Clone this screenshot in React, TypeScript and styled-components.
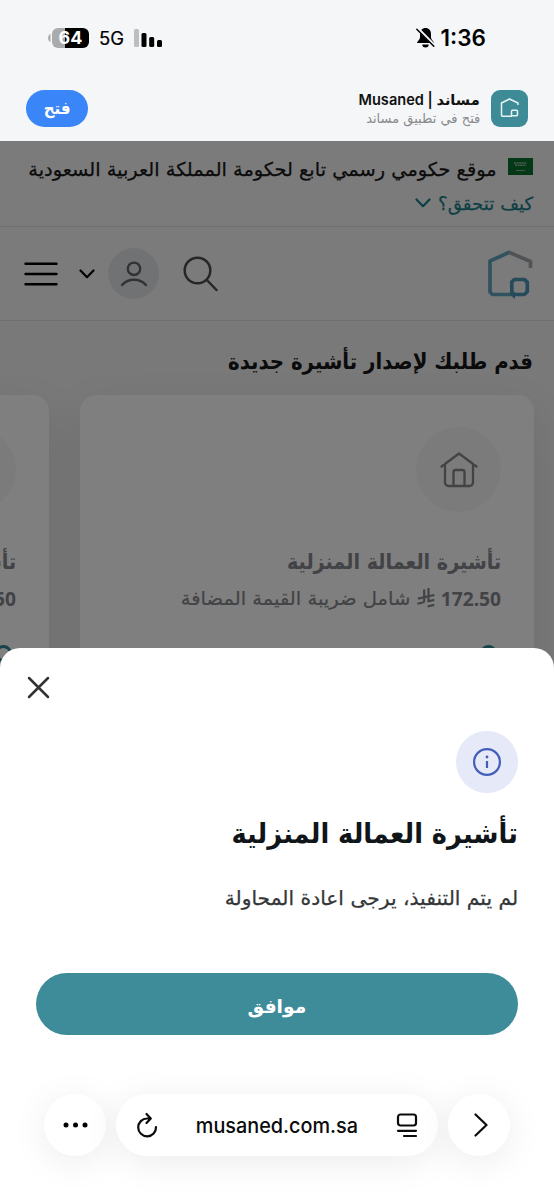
import React from "react";
import styled, { createGlobalStyle } from "styled-components";

const Global = createGlobalStyle`
  * { box-sizing: border-box; }
  body { margin: 0; background: #fff; }
  button { border: 0; padding: 0; background: none; font: inherit; color: inherit; }
  svg { display: block; flex: none; }
`;

const arabic = `"DejaVu Sans", sans-serif`;
const latin = `Inter, "DejaVu Sans", sans-serif`;

const Screen = styled.div`
  position: relative;
  width: 554px;
  height: 1200px;
  overflow: hidden;
  display: flex;
  flex-direction: column;
  direction: rtl;
  font-family: ${arabic};
  background: #fff;
`;

/* One line of text; $stretch condenses or widens the glyphs from the start edge. */
const Line = styled.span<{
  $size: number;
  $weight?: number;
  $color?: string;
  $stretch?: number;
  $origin?: string;
  $font?: string;
  $stroke?: number;
}>`
  display: block;
  flex: none;
  white-space: nowrap;
  font-family: ${(p) => p.$font ?? "inherit"};
  font-size: ${(p) => p.$size}px;
  font-weight: ${(p) => p.$weight ?? 400};
  color: ${(p) => p.$color ?? "#161616"};
  -webkit-text-stroke: ${(p) => p.$stroke ?? 0}px currentColor;
  transform: scaleX(${(p) => p.$stretch ?? 1});
  transform-origin: ${(p) => p.$origin ?? "right"} center;
`;

const StatusBar = styled.header`
  flex: none;
  height: 75px;
  padding: 0 68px 0 48px;
  display: flex;
  align-items: center;
  justify-content: space-between;
  background: #f4f6f8;
  font-family: ${latin};
  color: #000;
`;

const Clock = styled.div`
  display: flex;
  align-items: center;
  gap: 6px;
`;

const Signals = styled.div`
  display: flex;
  align-items: center;
  gap: 10px;
  direction: ltr;
`;

const BatteryGroup = styled.div`
  display: flex;
  align-items: center;
  gap: 1px;
`;

const Battery = styled.div`
  width: 37px;
  height: 20px;
  border-radius: 6px;
  background: linear-gradient(90deg, #a9abad 36%, #000 36%);
  color: #fff;
  font-size: 18px;
  font-weight: 700;
  line-height: 20px;
  text-align: center;
`;

const AppBanner = styled.section`
  flex: none;
  height: 66px;
  padding: 0 26px 0 26px;
  display: flex;
  align-items: center;
  background: #f4f6f8;
`;

const AppIcon = styled.div`
  width: 37px;
  height: 37px;
  border-radius: 9px;
  background: #3e8b98;
  display: flex;
  align-items: center;
  justify-content: center;
`;

const AppNames = styled.div`
  flex: 1;
  margin-right: 11px;
  padding-top: 2px;
  display: flex;
  flex-direction: column;
  align-items: flex-start;
  line-height: 19px;
`;

const OpenButton = styled.button`
  width: 62px;
  height: 37px;
  border-radius: 19px;
  background: #3a86f8;
  display: flex;
  align-items: center;
  justify-content: center;
`;

const Site = styled.main`
  position: relative;
  flex: 1;
  display: flex;
  flex-direction: column;
  overflow: hidden;
  background: #f2f2f3;
`;

const Backdrop = styled.div`
  position: absolute;
  inset: 0;
  background: rgba(0, 0, 0, 0.5);
`;

const GovBar = styled.section`
  flex: none;
  height: 86px;
  padding: 11px 21px 0;
  background: #f7f7f8;
  border-bottom: 1px solid #dedfe1;
`;

const GovRow = styled.div<{ $gap: number }>`
  height: 34px;
  display: flex;
  align-items: center;
  gap: ${(p) => p.$gap}px;
`;

const Flag = styled.svg`
  margin-top: -6px;
`;

const Nav = styled.nav`
  flex: none;
  height: 94px;
  padding: 0 21px 0 24px;
  display: flex;
  align-items: center;
  justify-content: space-between;
  background: #f7f7f8;
  border-bottom: 1px solid #dedfe1;
`;

const NavTools = styled.div`
  display: flex;
  align-items: center;
`;

const Avatar = styled.div`
  width: 51px;
  height: 51px;
  margin: 0 24px 0 13px;
  border-radius: 50%;
  background: #e3e5e8;
  display: flex;
  align-items: center;
  justify-content: center;
`;

const MenuIcon = styled.svg`
  margin-right: 21px;
`;

const Services = styled.section`
  flex: 1;
  padding: 24px 20px 0;
`;

const Heading = styled.div`
  height: 32px;
  padding-right: 1px;
  display: flex;
  align-items: center;
  margin-bottom: 18px;
`;

const Cards = styled.div`
  display: flex;
  gap: 31px;
`;

const Card = styled.article`
  flex: none;
  width: 454px;
  height: 420px;
  padding: 32px 33px 0;
  border-radius: 16px;
  background: #fff;
  box-shadow: 0 16px 44px rgba(30, 32, 60, 0.1);
`;

const CardIcon = styled.div`
  width: 85px;
  height: 85px;
  border-radius: 50%;
  background: #f7f7f7;
  display: flex;
  align-items: center;
  justify-content: center;
`;

const CardTitle = styled.div`
  height: 40px;
  margin-top: 29px;
  display: flex;
  align-items: center;
`;

const Price = styled.div`
  height: 34px;
  display: flex;
  align-items: center;
  gap: 6px;
`;

const Radio = styled.div`
  width: 17px;
  height: 17px;
  margin-top: 30px;
  margin-right: 4px;
  border: 3px solid #2a8a97;
  border-radius: 50%;
`;

const Sheet = styled.section`
  position: absolute;
  inset: 648px 0 0;
  padding: 28px 36px 0;
  display: flex;
  flex-direction: column;
  align-items: flex-start;
  border-radius: 20px 20px 0 0;
  background: #fff;
`;

const Close = styled.button`
  align-self: flex-end;
  margin-left: -9px;
`;

const InfoBadge = styled.div`
  width: 62px;
  height: 62px;
  margin-top: 32px;
  border-radius: 50%;
  background: #e5e9f8;
  display: flex;
  align-items: center;
  justify-content: center;
`;

const SheetTitle = styled.h2`
  margin: 18px 0 0;
  height: 44px;
  display: flex;
  align-items: center;
`;

const SheetText = styled.div`
  margin-top: 23px;
  height: 40px;
  display: flex;
  align-items: center;
`;

const Confirm = styled.button`
  width: 482px;
  height: 62px;
  margin-top: 55px;
  padding-top: 3px;
  border-radius: 31px;
  background: #3e8b9a;
  display: flex;
  align-items: center;
  justify-content: center;
`;

const BrowserBar = styled.footer`
  position: absolute;
  inset: auto 44px 44px;
  height: 62px;
  display: flex;
  gap: 10px;
  direction: ltr;
  color: #0b0b0b;
  font-family: ${latin};
`;

const RoundButton = styled.button<{ $nudge?: number }>`
  width: 62px;
  height: 62px;
  padding-left: ${(p) => p.$nudge ?? 0}px;
  border-radius: 50%;
  background: #fff;
  box-shadow: 0 6px 36px rgba(0, 0, 0, 0.08);
  display: flex;
  align-items: center;
  justify-content: center;
`;

const AddressPill = styled.div`
  flex: 1;
  padding: 0 20px;
  border-radius: 31px;
  background: #fff;
  box-shadow: 0 6px 36px rgba(0, 0, 0, 0.08);
  display: flex;
  align-items: center;
  justify-content: space-between;
`;

const Chevron = ({ color }: { color: string }) => (
  <svg width="16" height="10" viewBox="0 0 16 10" fill="none" stroke={color} strokeWidth="2.2" strokeLinecap="round" strokeLinejoin="round">
    <path d="M1.5 1.5 8 8.2l6.5-6.7" />
  </svg>
);

const ServiceCard = () => (
  <Card>
    <CardIcon>
      <svg width="38" height="36" viewBox="0 0 38 36" fill="none" stroke="#85868b" strokeWidth="2.3" strokeLinecap="round" strokeLinejoin="round">
        <path d="M1.5 14.5 19 1.5l17.5 13M5 12v18.5a3.5 3.5 0 0 0 3.5 3.5h21a3.5 3.5 0 0 0 3.5-3.5V12M13.5 34V20a2 2 0 0 1 2-2h7a2 2 0 0 1 2 2v14" />
      </svg>
    </CardIcon>
    <CardTitle>
      <Line $size={21.5} $weight={700} $color="#85868c" $stretch={0.892}>تأشيرة العمالة المنزلية</Line>
    </CardTitle>
    <Price>
      <Line $size={19.2} $weight={700} $color="#85868c" $font="'Noto Sans', sans-serif">172.50</Line>
      <svg width="18" height="20" viewBox="0 0 18 20" fill="none" stroke="#85868c" strokeWidth="2.2">
        <path d="M7.2 1.5v11.300q0 1.300-1.300 1.700L.4 15.800M11.500 0v14.200M1 10.600 17.300 7M11.500 13.300l5.800-1.400M10.600 18.500l6.700-1.600" />
      </svg>
      <Line $size={19} $color="#85868c" $stroke={0.2} $stretch={1.028}>شامل ضريبة القيمة المضافة</Line>
    </Price>
    <Radio />
  </Card>
);

export default function App() {
  return (
    <Screen>
      <Global />
      <StatusBar>
        <Clock>
          <Line $size={22.5} $weight={600} $color="#000">1:36</Line>
          <svg width="19" height="20" viewBox="0 0 19 20">
            <path d="M9.5 0c-3.400 0-5.500 2.500-5.500 6v3.500c0 2-2.500 3.500-3 5.500h17c-.5-2-3-3.500-3-5.500V6c0-3.500-2.100-6-5.500-6ZM6.300 16.500h6.400a3.200 3 0 0 1-6.400 0Z" fill="#000" />
            <path d="m1.800 .5 16.500 17" stroke="#f4f6f8" strokeWidth="3" />
            <path d="m.8 1.300 17 17" stroke="#000" strokeWidth="1.5" strokeLinecap="round" />
          </svg>
        </Clock>
        <Signals>
          <BatteryGroup>
            <svg width="3" height="8" viewBox="0 0 3 8"><path d="M2.500 0v8C-.7 7-.7 1 2.500 0Z" fill="#a9abad" /></svg>
            <Battery>64</Battery>
          </BatteryGroup>
          <Line $size={18.5} $color="#000" $stroke={0.2} $origin="left">5G</Line>
          <svg width="29" height="18" viewBox="0 0 29 18">
            <rect x="0" y="0" width="5" height="18" rx="1.500" fill="#bcbec0" />
            <rect x="7.500" y="4" width="5" height="14" rx="1.500" />
            <rect x="15.200" y="8" width="5" height="10" rx="1.500" />
            <rect x="23" y="11" width="5" height="7" rx="1.500" />
          </svg>
        </Signals>
      </StatusBar>

      <AppBanner>
        <AppIcon>
          <svg width="20" height="20" viewBox="0 0 20 20" fill="none" stroke="#e8f3f4" strokeWidth="1.5" strokeLinejoin="round">
            <path d="M18 7V5L9.500 1 1.500 5v12.200q0 1 1 1H12" />
            <rect x="11.500" y="12.200" width="6" height="5.600" rx="1" />
          </svg>
        </AppIcon>
        <AppNames>
          <Line $size={15} $weight={600} $color="#111" $font={latin} $stretch={0.972}>مساند | Musaned</Line>
          <Line $size={13.5} $color="#8a8b8d" $stretch={0.965}>فتح في تطبيق مساند</Line>
        </AppNames>
        <OpenButton>
          <Line $size={17} $color="#fff" $weight={700} $origin="center" $stretch={0.88}>فتح</Line>
        </OpenButton>
      </AppBanner>

      <Site>
        <GovBar>
          <GovRow $gap={11}>
            <Flag width="25" height="17" viewBox="0 0 25 17">
              <rect width="25" height="17" fill="#08702e" />
              <path d="M6 5h13M7 7.300h11" stroke="#8fbd9f" strokeWidth="1.5" strokeDasharray="2 .6" />
              <path d="M8 12.500h9" stroke="#b4d3bf" strokeWidth=".7" />
            </Flag>
            <Line $size={19} $stroke={0.25} $stretch={1.019}>موقع حكومي رسمي تابع لحكومة المملكة العربية السعودية</Line>
          </GovRow>
          <GovRow $gap={8}>
            <Line $size={18} $color="#1b7f8c" $stroke={0.25} $stretch={1.01}>كيف تتحقق؟</Line>
            <Chevron color="#1b7f8c" />
          </GovRow>
        </GovBar>

        <Nav>
          <svg width="46" height="50" viewBox="0 0 46 50" fill="none" strokeWidth="3.7" strokeLinejoin="round">
            <path d="M25 45.500H5.500L3 43V12L23 3" stroke="#62a5bd" />
            <path d="M22 3.300 43.500 12.500v6.500" stroke="#a3a9ad" />
            <path d="M27.300 30.500h10l3 2.700v9.500l-3 2.800h-10l-2.500-2.500v-10z" stroke="#4a94b5" />
            <path d="M22 45h6v5z" fill="#4a94b5" />
          </svg>
          <NavTools>
            <svg width="35" height="36" viewBox="0 0 35 36" fill="none" stroke="#4b4c51" strokeWidth="2.5" strokeLinecap="round">
              <circle cx="14.500" cy="14.500" r="12.800" />
              <path d="m23.800 24 9.700 10" />
            </svg>
            <Avatar>
              <svg width="28" height="26" viewBox="0 0 28 26" fill="none" stroke="#63646a" strokeWidth="2.4" strokeLinecap="round">
                <circle cx="14" cy="7.800" r="6.200" />
                <path d="M2 24c6-7 18-7 24 0" />
              </svg>
            </Avatar>
            <Chevron color="#000" />
            <MenuIcon width="34" height="24" viewBox="0 0 34 24" stroke="#000" strokeWidth="2.4" strokeLinecap="round">
              <path d="M1.500 1.700h31M1.500 12h31M1.500 22.300h31" />
            </MenuIcon>
          </NavTools>
        </Nav>

        <Services>
          <Heading>
            <Line $size={22} $weight={700} $stretch={0.897}>قدم طلبك لإصدار تأشيرة جديدة</Line>
          </Heading>
          <Cards>
            <ServiceCard />
            <ServiceCard />
          </Cards>
        </Services>
        <Backdrop />
      </Site>

      <Sheet>
        <Close aria-label="إغلاق">
          <svg width="23" height="23" viewBox="0 0 23 23" stroke="#333" strokeWidth="2.5" strokeLinecap="round">
            <path d="m2 2 19 19M21 2 2 21" />
          </svg>
        </Close>
        <InfoBadge>
          <svg width="30" height="30" viewBox="0 0 30 30" fill="none" stroke="#435eb8" strokeWidth="2.2">
            <circle cx="15" cy="15" r="12.900" />
            <path d="M15 14v7" />
            <circle cx="15" cy="10" r="1.400" fill="#435eb8" stroke="none" />
          </svg>
        </InfoBadge>
        <SheetTitle>
          <Line $size={28} $weight={700} $color="#101519" $stretch={0.915}>تأشيرة العمالة المنزلية</Line>
        </SheetTitle>
        <SheetText>
          <Line $size={19.8} $color="#343638" $stroke={0.25} $stretch={1.022}>لم يتم التنفيذ، يرجى اعادة المحاولة</Line>
        </SheetText>
        <Confirm>
          <Line $size={19} $weight={700} $color="#fff" $origin="center" $stretch={0.98}>موافق</Line>
        </Confirm>
      </Sheet>

      <BrowserBar>
        <RoundButton>
          <svg width="25" height="6" viewBox="0 0 25 6">
            <circle cx="3" cy="3" r="2.500" />
            <circle cx="12.500" cy="3" r="2.500" />
            <circle cx="22" cy="3" r="2.500" />
          </svg>
        </RoundButton>
        <AddressPill>
          <svg width="22" height="26" viewBox="0 0 22 26" fill="none" stroke="#0b0b0b" strokeWidth="2.2" strokeLinecap="round" strokeLinejoin="round">
            <path d="M14.500 6.500H11.200A8.900 8.900 0 1 0 20 15M10.500 2l4.300 4.500-4.300 4.500" />
          </svg>
          <Line $size={20.5} $weight={500} $color="#0b0b0b" $origin="center" $stretch={0.967}>musaned.com.sa</Line>
          <svg width="22" height="26" viewBox="0 0 22 26" fill="none" stroke="#0b0b0b" strokeWidth="2.2" strokeLinecap="round">
            <rect x="2" y="2.500" width="18" height="11" rx="2.500" />
            <path d="M2 18.800h18M8 24h12" />
          </svg>
        </AddressPill>
        <RoundButton $nudge={4}>
          <svg width="14" height="24" viewBox="0 0 14 24" fill="none" stroke="#0b0b0b" strokeWidth="2.2" strokeLinecap="round" strokeLinejoin="round">
            <path d="m1.500 1.500 11 10.500-11 10.500" />
          </svg>
        </RoundButton>
      </BrowserBar>
    </Screen>
  );
}
